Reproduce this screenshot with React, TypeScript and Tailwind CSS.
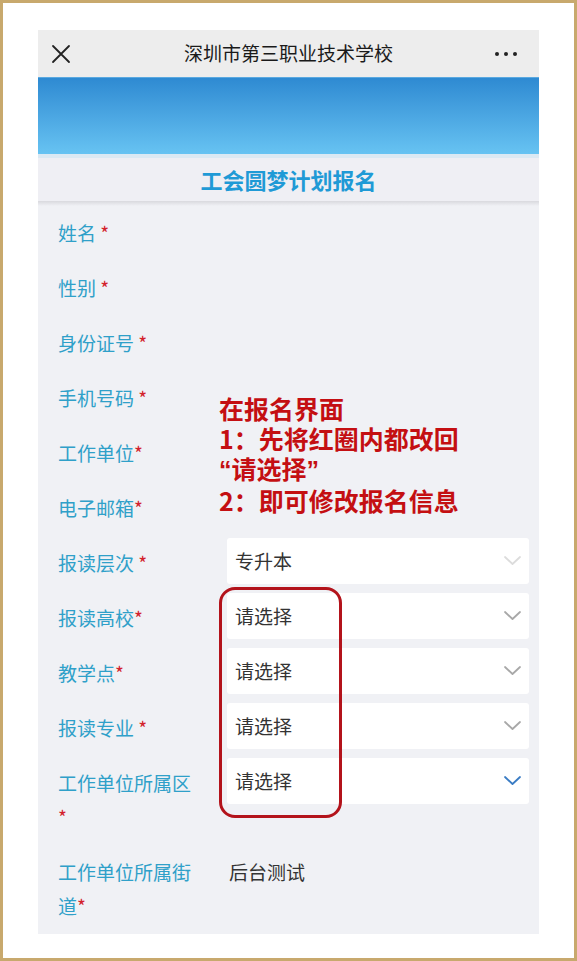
import React from 'react';

const FONT = { fontFamily: '"Noto Sans CJK SC", "Noto Sans", sans-serif' };

interface Field {
  label: string;
  star: string;
  select?: { value: string; chevron: string };
  text?: string;
}

const fields: Field[] = [
  { label: '姓名', star: ' *' },
  { label: '性别', star: ' *' },
  { label: '身份证号', star: ' *' },
  { label: '手机号码', star: ' *' },
  { label: '工作单位', star: '*' },
  { label: '电子邮箱', star: '*' },
  { label: '报读层次', star: ' *', select: { value: '专升本', chevron: '#dcdcdc' } },
  { label: '报读高校', star: '*', select: { value: '请选择', chevron: '#a8a8a8' } },
  { label: '教学点', star: '*', select: { value: '请选择', chevron: '#a8a8a8' } },
  { label: '报读专业', star: ' *', select: { value: '请选择', chevron: '#a8a8a8' } },
  { label: '工作单位所属区', star: ' *', select: { value: '请选择', chevron: '#3a7cc4' } },
  { label: '工作单位所属街道', star: '*', text: '后台测试' },
];

function Chevron({ color }: { color: string }) {
  return (
    <svg width="17" height="10" viewBox="0 0 17 10" fill="none">
      <polyline points="1,1 8.5,8 16,1" stroke={color} strokeWidth="1.8" strokeLinecap="round" strokeLinejoin="round" />
    </svg>
  );
}

function Row({ field }: { field: Field }) {
  return (
    <div className="flex items-start">
      <div className="w-[189px] shrink-0 pl-[20px] pr-[35px] pt-[9.5px] pb-[11.5px]">
        <p className="text-[19px] leading-[34px] text-[#2fa0c9]">
          {field.label}
          <span className="text-[#d3222b]">{field.star}</span>
        </p>
      </div>
      <div className="flex-1 pr-[10px]">
        {field.select && (
          <div className="mt-[2px] flex h-[46px] items-center justify-between rounded-[3px] bg-white pl-[8px] pr-[8px]">
            <span className="text-[19px] text-[#333]">{field.select.value}</span>
            <Chevron color={field.select.chevron} />
          </div>
        )}
        {field.text && (
          <p className="pl-[2px] pt-[9.5px] text-[19px] leading-[34px] text-[#333]">{field.text}</p>
        )}
      </div>
    </div>
  );
}

export default function App() {
  return (
    <div
      className="h-[961px] w-[577px] overflow-hidden border-[3px] border-[#c8a96d] bg-white pl-[35px] pt-[27px]"
      style={FONT}
    >
      <div className="w-[501px]">
        {/* Nav bar */}
        <div className="grid h-[47px] grid-cols-[1fr_auto_1fr] items-center bg-[#ededed]">
          <div className="pl-[13px]">
            <svg width="20" height="20" viewBox="0 0 20 20">
              <path d="M2 2 L18 18 M18 2 L2 18" stroke="#222" strokeWidth="1.8" strokeLinecap="round" />
            </svg>
          </div>
          <p className="text-[19px] text-[#1a1a1a]">深圳市第三职业技术学校</p>
          <div className="flex justify-end gap-[5px] pr-[22px]">
            <span className="h-[4px] w-[4px] rounded-full bg-[#222]" />
            <span className="h-[4px] w-[4px] rounded-full bg-[#222]" />
            <span className="h-[4px] w-[4px] rounded-full bg-[#222]" />
          </div>
        </div>

        {/* Banner */}
        <div className="h-[77px] border-t border-[#5aa9e0] bg-linear-to-b from-[#2e8ad2] to-[#67c3f2]" />
        <div className="h-[4px] bg-[#dbe9f3]" />

        {/* Title */}
        <div className="flex h-[43px] items-center justify-center bg-[#efeff4]">
          <p className="text-[22px] font-bold text-[#1f9ad6]">工会圆梦计划报名</p>
        </div>
        <div className="h-[5px] bg-linear-to-b from-[#d9d9de] to-[#f0f1f5]" />

        {/* Form */}
        <div className="relative bg-[#f0f1f5]">
          {fields.map((f) => (
            <Row key={f.label} field={f} />
          ))}

          {/* Annotation */}
          <div className="absolute left-[181px] top-[187px] text-[25px] font-bold leading-[30px] text-[#c40f12]">
            <p>在报名界面</p>
            <p>1：先将红圈内都改回</p>
            <p>
              <span style={{ fontFamily: '"Liberation Sans", sans-serif' }}>“</span>请选择
              <span style={{ fontFamily: '"Liberation Sans", sans-serif' }}>”</span>
            </p>
            <p>2：即可修改报名信息</p>
          </div>
          <div className="absolute left-[181px] top-[381px] h-[231px] w-[123px] rounded-[16px] border-[3.5px] border-[#b3131b]" />
        </div>
      </div>
    </div>
  );
}
